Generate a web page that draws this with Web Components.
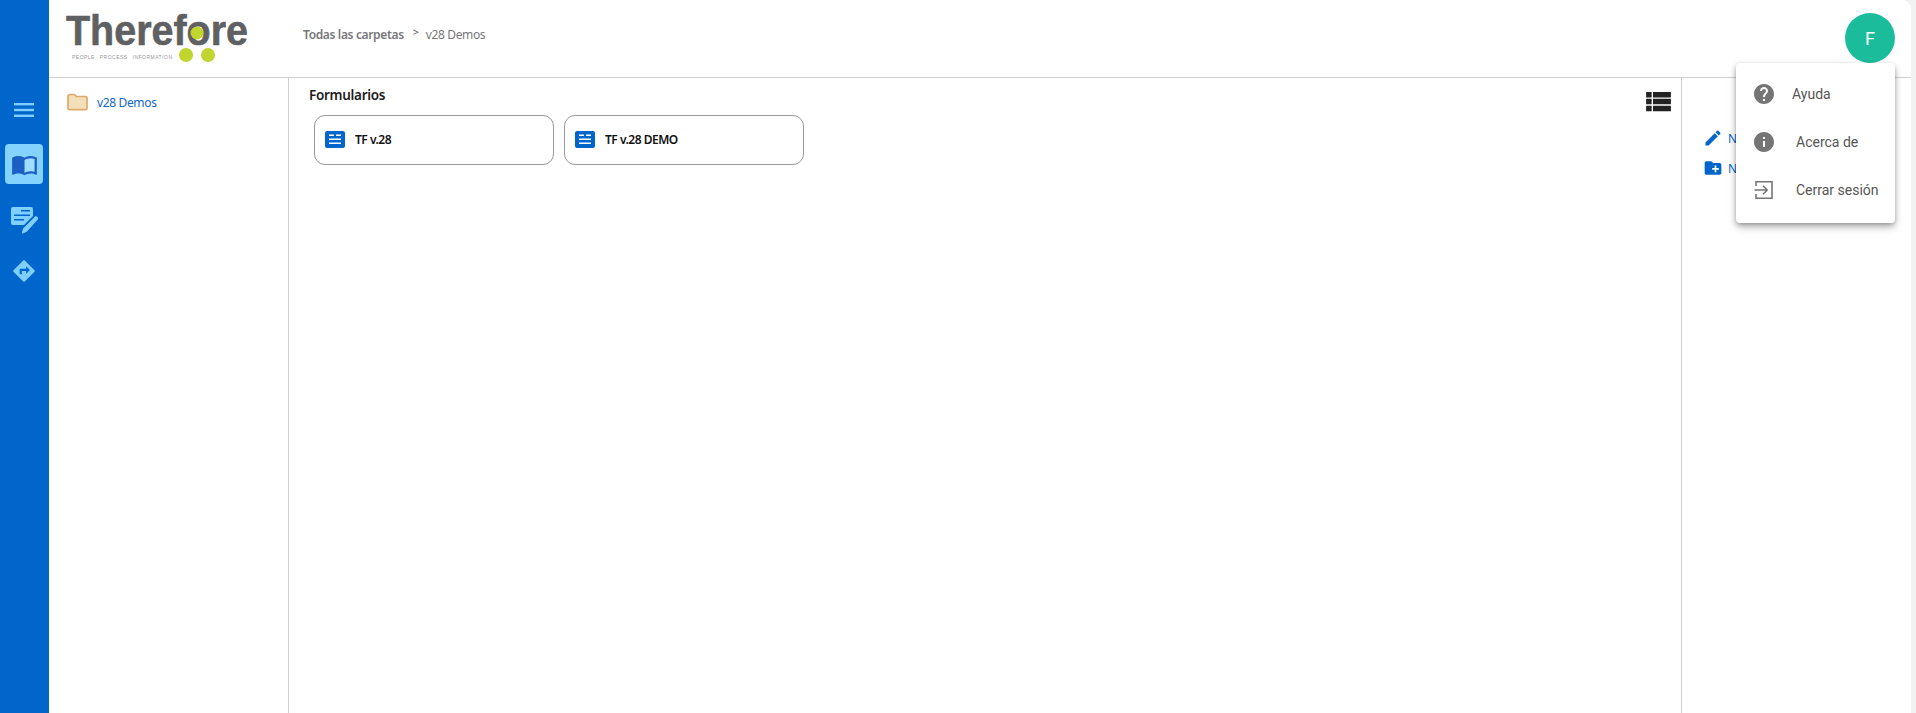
<!DOCTYPE html>
<html lang="es">
<head>
<meta charset="utf-8">
<title>Therefore</title>
<style>
  html, body { margin: 0; height: 100%; background: #f2f2f2; overflow: hidden; }
  body { font-family: "Noto Sans", "Open Sans", sans-serif; }
</style>
</head>
<body>

<app-shell>
  <side-rail slot="rail">
    <rail-item>
      <svg width="20" height="14" viewBox="0 0 20 14" fill="currentColor"><rect y="0" width="20" height="2.4"/><rect y="5.8" width="20" height="2.4"/><rect y="11.6" width="20" height="2.4"/></svg>
    </rail-item>
    <rail-item active style="margin-top:14px">
      <svg width="27" height="27" viewBox="0 0 24 24"><path fill="#9fdcff" d="M12 8c1.35-.85 3.8-1.5 5.5-1.5 1.2 0 2.4.15 3.5.5v11.5c-1.1-.35-2.3-.5-3.5-.5-1.7 0-4.15.65-5.5 1.5z"/><path fill="#1c5fc4" d="M21 5c-1.11-.35-2.33-.5-3.5-.5-1.95 0-4.05.4-5.5 1.5-1.45-1.1-3.55-1.5-5.5-1.5S2.45 4.9 1 6v14.65c0 .25.25.5.5.5.1 0 .15-.05.25-.05C3.1 20.45 5.05 20 6.5 20c1.95 0 4.05.4 5.5 1.5 1.35-.85 3.8-1.5 5.5-1.5 1.65 0 3.35.3 4.75 1.05.1.05.15.05.25.05.25 0 .5-.25.5-.5V6c-.6-.45-1.25-.75-2-1zm0 13.5c-1.1-.35-2.3-.5-3.5-.5-1.7 0-4.15.65-5.5 1.5V8c1.35-.85 3.8-1.5 5.5-1.5 1.2 0 2.4.15 3.5.5v11.5z"/></svg>
    </rail-item>
    <rail-item style="margin-top:16px">
      <svg width="28" height="28" viewBox="0 0 28 28"><rect x="1" y="1" width="22" height="18" rx="2" fill="currentColor"/><path fill="#0066cc" d="M11 4h9v1.500h-9zM4 8.500h16v1.500H4zM4 13h10v1.500H4z"/><path fill="#0066cc" d="M11 28l1-7 14-14 6 6-14 14z"/><path fill="currentColor" d="M13 27.500c-.8.3-1.400-.3-1.100-1.100l1.200-4L25 10.600c.5-.5 1.300-.5 1.800 0l1 1c.5.5.5 1.300 0 1.800L17 25.600z"/></svg>
    </rail-item>
    <rail-item style="margin-top:11px">
      <svg width="26" height="26" viewBox="0 0 24 24" fill="currentColor"><path d="M21.71 11.29l-9-9c-.39-.39-1.02-.39-1.41 0l-9 9c-.39.39-.39 1.02 0 1.41l9 9c.39.39 1.02.39 1.41 0l9-9c.39-.38.39-1.01 0-1.41zM14 14.5V12h-4v3H8v-4c0-.55.45-1 1-1h5V7.5l3.5 3.5-3.5 3.5z"/></svg>
    </rail-item>
  </side-rail>

  <top-bar slot="top">
    <tf-logo slot="logo"></tf-logo>
    <bread-crumbs slot="crumbs" root="Todas las carpetas" current="v28 Demos"></bread-crumbs>
    <user-menu slot="user" initial="F">
      <menu-item label="Ayuda" gap="22">
        <svg width="24" height="24" viewBox="0 0 24 24" fill="currentColor"><path d="M12 2C6.48 2 2 6.48 2 12s4.48 10 10 10 10-4.48 10-10S17.52 2 12 2zm1 17h-2v-2h2v2zm2.07-7.75l-.9.92C13.45 12.9 13 13.5 13 15h-2v-.5c0-1.1.45-2.1 1.17-2.83l1.24-1.26c.37-.36.59-.86.59-1.41 0-1.1-.9-2-2-2s-2 .9-2 2H8c0-2.21 1.79-4 4-4s4 1.79 4 4c0 .88-.36 1.68-.93 2.25z"/></svg>
      </menu-item>
      <menu-item label="Acerca de" gap="26">
        <svg width="24" height="24" viewBox="0 0 24 24" fill="currentColor"><path d="M12 2C6.48 2 2 6.48 2 12s4.48 10 10 10 10-4.48 10-10S17.52 2 12 2zm1 15h-2v-6h2v6zm0-8h-2V7h2v2z"/></svg>
      </menu-item>
      <menu-item label="Cerrar sesión" gap="26">
        <svg width="24" height="24" viewBox="0 0 24 24" fill="none" stroke="currentColor" stroke-width="1.6"><path d="M4 8V3.800h16v16.400H4V16"/><path d="M2.500 12H15M11 7.800l4.200 4.200-4.200 4.200"/></svg>
      </menu-item>
    </user-menu>
  </top-bar>

  <folder-tree slot="left" label="v28 Demos"></folder-tree>

  <forms-panel slot="main" heading="Formularios">
    <form-card label="TF v.28"></form-card>
    <form-card label="TF v.28 DEMO"></form-card>
  </forms-panel>

  <action-panel slot="right">
    <action-link label="N">
      <svg width="20" height="20" viewBox="0 0 24 24" fill="currentColor"><path d="M3 17.25V21h3.75L17.81 9.94l-3.75-3.75L3 17.25zM20.71 7.04c.39-.39.39-1.02 0-1.41l-2.34-2.34c-.39-.39-1.02-.39-1.41 0l-1.83 1.83 3.75 3.75 1.83-1.83z"/></svg>
    </action-link>
    <action-link label="N">
      <svg width="20" height="20" viewBox="0 0 24 24" fill="currentColor"><path d="M20 6h-8l-2-2H4c-1.11 0-1.99.89-1.99 2L2 18c0 1.11.89 2 2 2h16c1.11 0 2-.89 2-2V8c0-1.11-.89-2-2-2zm-1 8h-3v3h-2v-3h-3v-2h3V9h2v3h3v2z"/></svg>
    </action-link>
  </action-panel>
</app-shell>

<script>
class AppShell extends HTMLElement {
  constructor() {
    super();
    this.attachShadow({ mode: 'open' });
    this.shadowRoot.innerHTML = `
      <style>
        :host { display: flex; height: 713px; padding-right: 5px; box-sizing: border-box; }
        .content {
          flex: 1;
          min-width: 0;
          display: flex;
          flex-direction: column;
          background: #fff;
          border-top-right-radius: 9px;
        }
        .panes { flex: 1; display: flex; min-height: 0; }
      </style>
      <slot name="rail"></slot>
      <div class="content">
        <slot name="top"></slot>
        <div class="panes">
          <slot name="left"></slot>
          <slot name="main"></slot>
          <slot name="right"></slot>
        </div>
      </div>
    `;
  }
}

class SideRail extends HTMLElement {
  constructor() {
    super();
    this.attachShadow({ mode: 'open' });
    this.shadowRoot.innerHTML = `
      <style>
        :host {
          display: flex;
          flex-direction: column;
          align-items: center;
          width: 49px;
          flex: none;
          padding: 90px 1px 0 0;
          box-sizing: border-box;
          background: #0066cc;
          color: #7fd0ff;
        }
      </style>
      <slot></slot>
    `;
  }
}

class RailItem extends HTMLElement {
  constructor() {
    super();
    this.attachShadow({ mode: 'open' });
    this.shadowRoot.innerHTML = `
      <style>
        :host {
          display: flex;
          align-items: center;
          justify-content: center;
          width: 38px;
          height: 40px;
          border-radius: 4px;
          flex: none;
        }
        :host([active]) { background: #84d2ff; }
      </style>
      <slot></slot>
    `;
  }
}

class TopBar extends HTMLElement {
  constructor() {
    super();
    this.attachShadow({ mode: 'open' });
    this.shadowRoot.innerHTML = `
      <style>
        :host {
          display: flex;
          align-items: center;
          height: 78px;
          flex: none;
          box-sizing: border-box;
          border-bottom: 1px solid #cfcfcf;
          padding-left: 17px;
        }
        .crumbs { margin-left: 55px; margin-top: -8px; }
        .user { margin-left: auto; margin-right: 16px; margin-top: -1px; }
      </style>
      <slot name="logo"></slot>
      <div class="crumbs"><slot name="crumbs"></slot></div>
      <div class="user"><slot name="user"></slot></div>
    `;
  }
}

class TfLogo extends HTMLElement {
  constructor() {
    super();
    this.attachShadow({ mode: 'open' });
    this.shadowRoot.innerHTML = `
      <style>
        :host { display: block; align-self: flex-start; width: 182px; height: 64px; }
        svg { display: block; overflow: visible; }
        .word { font: 700 42px "Liberation Sans", Arial, sans-serif; fill: #5f6062; stroke: #5f6062; stroke-width: .6px; }
        .tag { font: 5px "Liberation Sans", Arial, sans-serif; fill: #9a9a9a; word-spacing: 3px; }
      </style>
      <svg width="210" height="64" viewBox="0 0 210 64">
        <text class="word" x="0" y="45" textLength="182" lengthAdjust="spacingAndGlyphs">Therefore</text>
        <circle cx="131" cy="33" r="6.500" fill="#c1d52f"/>
        <text class="tag" x="6" y="59" textLength="100">PEOPLE PROCESS INFORMATION</text>
        <circle cx="120" cy="55" r="7" fill="#c1d52f"/>
        <circle cx="142" cy="55" r="7" fill="#c1d52f"/>
      </svg>
    `;
  }
}

class BreadCrumbs extends HTMLElement {
  constructor() {
    super();
    this.attachShadow({ mode: 'open' });
    this.shadowRoot.innerHTML = `
      <style>
        :host { display: flex; align-items: center; font: 12px "Noto Sans", sans-serif; color: #77777a; letter-spacing: -.35px; white-space: nowrap; }
        .root { font-weight: 600; }
        .sep { margin: -7px 7px 0 9px; font-size: 11px; font-weight: 600; }
      </style>
      <span class="root"></span><span class="sep">&gt;</span><span class="current"></span>
    `;
    this.shadowRoot.querySelector('.root').textContent = this.getAttribute('root');
    this.shadowRoot.querySelector('.current').textContent = this.getAttribute('current');
  }
}

class UserMenu extends HTMLElement {
  constructor() {
    super();
    this.attachShadow({ mode: 'open' });
    this.shadowRoot.innerHTML = `
      <style>
        :host { display: block; position: relative; }
        .avatar {
          display: flex;
          align-items: center;
          justify-content: center;
          width: 50px;
          height: 50px;
          border-radius: 50%;
          background: #1abc9c;
          color: #fff;
          font: 18px Roboto, sans-serif;
        }
        .menu {
          position: absolute;
          z-index: 5;
          top: 50px;
          right: 0;
          width: 159px;
          height: 160px;
          padding: 7px 0;
          box-sizing: border-box;
          background: #fff;
          border-radius: 4px;
          box-shadow: 0 3px 6px -1px rgba(0,0,0,.3), 0 5px 10px rgba(0,0,0,.14), 0 1px 4px rgba(0,0,0,.12);
        }
      </style>
      <div class="avatar"></div>
      <div class="menu"><slot></slot></div>
    `;
    this.shadowRoot.querySelector('.avatar').textContent = this.getAttribute('initial');
  }
}

class MenuItem extends HTMLElement {
  constructor() {
    super();
    this.attachShadow({ mode: 'open' });
    this.shadowRoot.innerHTML = `
      <style>
        :host {
          display: flex;
          align-items: center;
          height: 48px;
          padding-left: 16px;
          color: #757575;
        }
        ::slotted(svg) { flex: none; }
        span { font: 14px Roboto, sans-serif; color: #555; white-space: nowrap; }
      </style>
      <slot></slot><span></span>
    `;
    const label = this.shadowRoot.querySelector('span');
    label.textContent = this.getAttribute('label');
    label.style.marginLeft = (this.getAttribute('gap') - 6) + 'px';
  }
}

class FolderTree extends HTMLElement {
  constructor() {
    super();
    this.attachShadow({ mode: 'open' });
    this.shadowRoot.innerHTML = `
      <style>
        :host {
          display: block;
          width: 240px;
          flex: none;
          box-sizing: border-box;
          border-right: 1px solid #cfcfcf;
          padding: 15px 0 0 18px;
        }
        .row { display: flex; align-items: center; gap: 9px; color: #0f66c8; font: 12px "Noto Sans", sans-serif; letter-spacing: -.35px; }
        svg { display: block; flex: none; }
      </style>
      <div class="row">
        <svg width="21" height="18" viewBox="0 0 21 18"><path d="M1 3.500C1 2 1.800 1.500 3 1.500h4.500L9.500 3.500H18.500c1 0 1.500.7 1.500 1.500v10c0 1-.7 1.700-1.500 1.700h-16C1.600 16.700 1 16 1 15z" fill="#f3dfb8" stroke="#dfa96c" stroke-width="1.700"/></svg>
        <span></span>
      </div>
    `;
    this.shadowRoot.querySelector('span').textContent = this.getAttribute('label');
  }
}

class FormsPanel extends HTMLElement {
  constructor() {
    super();
    this.attachShadow({ mode: 'open' });
    this.shadowRoot.innerHTML = `
      <style>
        :host { display: block; flex: 1; min-width: 0; position: relative; padding: 8px 0 0 20px; box-sizing: border-box; }
        h2 { margin: 0 0 10px; font: 600 13.500px/19px "Noto Sans", sans-serif; letter-spacing: -.3px; color: #1c1c22; }
        .cards { display: flex; gap: 10px; padding-left: 5px; }
        .toggle { position: absolute; top: 7px; right: 6px; display: block; color: #222; }
      </style>
      <h2></h2>
      <svg class="toggle" width="33" height="33" viewBox="0 0 24 24" fill="currentColor"><path d="M3 14h4v-4H3v4zm0 5h4v-4H3v4zM3 9h4V5H3v4zm5 5h13v-4H8v4zm0 5h13v-4H8v4zM8 5v4h13V5H8z"/></svg>
      <div class="cards"><slot></slot></div>
    `;
    this.shadowRoot.querySelector('h2').textContent = this.getAttribute('heading');
  }
}

class FormCard extends HTMLElement {
  constructor() {
    super();
    this.attachShadow({ mode: 'open' });
    this.shadowRoot.innerHTML = `
      <style>
        :host {
          display: flex;
          align-items: center;
          gap: 10px;
          width: 240px;
          height: 50px;
          box-sizing: border-box;
          padding: 0 0 2px 10px;
          border: 1px solid #999;
          border-radius: 11px;
          font: 600 12px "Noto Sans", sans-serif;
          letter-spacing: -.5px;
          color: #111;
        }
        svg { display: block; flex: none; }
      </style>
      <svg width="20" height="17" viewBox="0 0 20 17">
        <rect width="20" height="17" rx="2" fill="#0066cc"/>
        <path fill="#fff" d="M4 3.500h5v1.500H4zM11 3.500h5v1.500h-5zM4 7.500h12v1.500H4zM4 11.500h12v1.500H4z"/>
      </svg>
      <span></span>
    `;
    this.shadowRoot.querySelector('span').textContent = this.getAttribute('label');
  }
}

class ActionPanel extends HTMLElement {
  constructor() {
    super();
    this.attachShadow({ mode: 'open' });
    this.shadowRoot.innerHTML = `
      <style>
        :host {
          display: flex;
          flex-direction: column;
          gap: 10px;
          width: 230px;
          flex: none;
          box-sizing: border-box;
          border-left: 1px solid #cfcfcf;
          padding: 50px 0 0 21px;
        }
      </style>
      <slot></slot>
    `;
  }
}

class ActionLink extends HTMLElement {
  constructor() {
    super();
    this.attachShadow({ mode: 'open' });
    this.shadowRoot.innerHTML = `
      <style>
        :host { display: flex; align-items: center; gap: 5px; height: 20px; color: #0066cc; font: 12px "Noto Sans", sans-serif; }
      </style>
      <slot></slot><span></span>
    `;
    this.shadowRoot.querySelector('span').textContent = this.getAttribute('label');
  }
}

customElements.define('app-shell', AppShell);
customElements.define('side-rail', SideRail);
customElements.define('rail-item', RailItem);
customElements.define('top-bar', TopBar);
customElements.define('tf-logo', TfLogo);
customElements.define('bread-crumbs', BreadCrumbs);
customElements.define('user-menu', UserMenu);
customElements.define('menu-item', MenuItem);
customElements.define('folder-tree', FolderTree);
customElements.define('forms-panel', FormsPanel);
customElements.define('form-card', FormCard);
customElements.define('action-panel', ActionPanel);
customElements.define('action-link', ActionLink);
</script>
</body>
</html>
